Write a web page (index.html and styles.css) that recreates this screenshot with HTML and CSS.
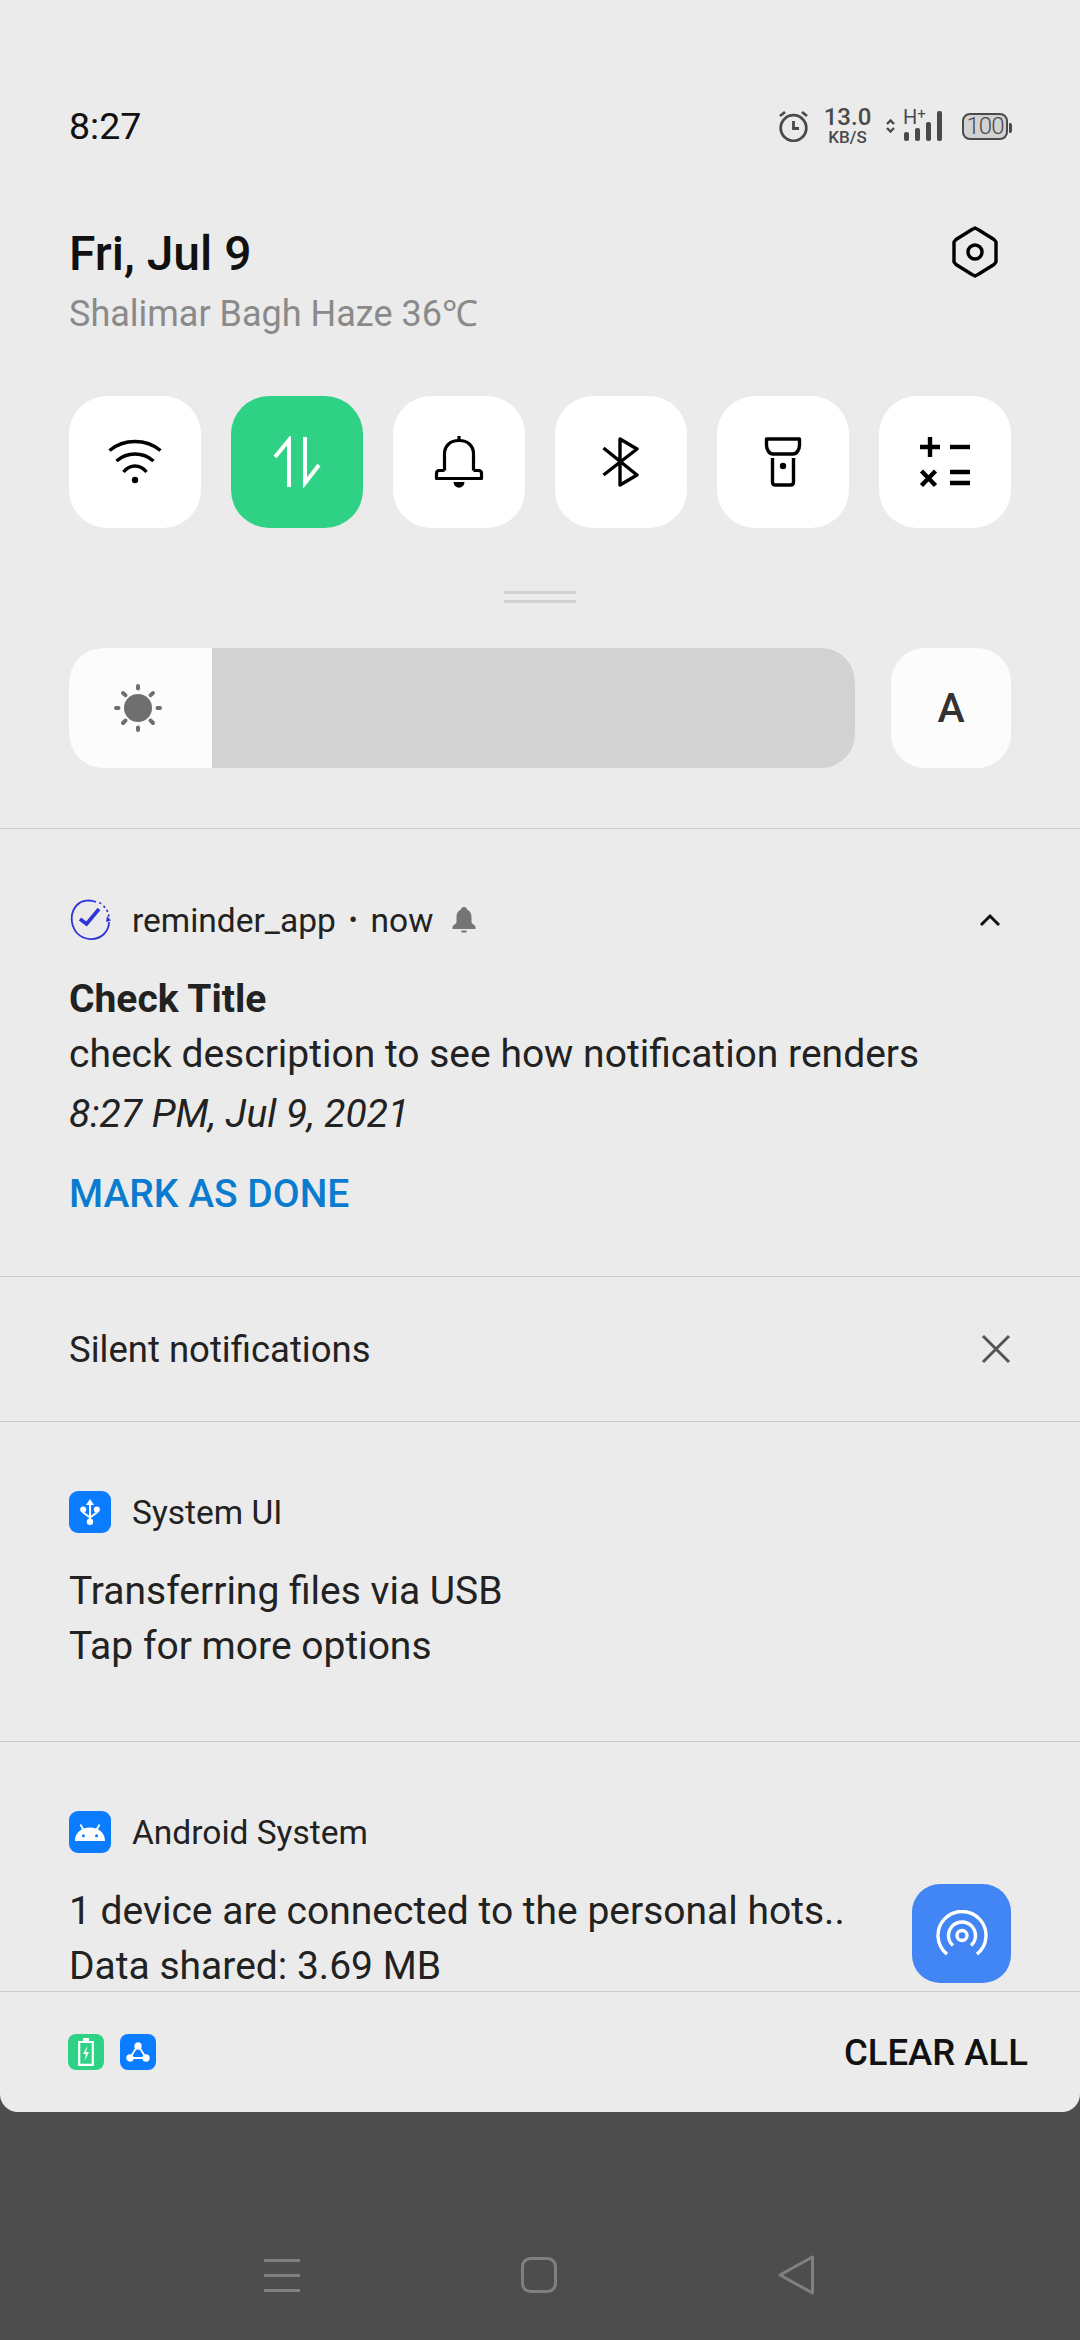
FILE: index.html
```html
<!DOCTYPE html>
<html lang="en">
<head>
    <meta charset="UTF-8">
    <title>Notification shade</title>
    <link rel="stylesheet" href="styles.css">
</head>
<body>
    <div class="panel">
        <!-- Quick settings -->
        <section class="quick">
            <div class="status">
                <span class="clock">8:27</span>
                <div class="status-icons">
                    <svg class="ic-alarm" width="30" height="32" viewBox="0 0 30 32" fill="none" stroke="#4a4a4a" stroke-width="2.800"><circle cx="15.500" cy="18" r="12.800"/><path d="M15.500 11V18.500H21"/><path d="M2 6 7 2M29 6 24 2"/></svg>
                    <div class="speed"><span class="speed-num">13.0</span><span class="speed-unit">KB/S</span></div>
                    <svg class="ic-arrows" width="9" height="16" viewBox="0 0 9 16" fill="none" stroke="#4a4a4a" stroke-width="2.400"><path d="M1 6 4.500 2.500 8 6M1 10 4.500 13.500 8 10"/></svg>
                    <div class="signal">
                        <span class="signal-type">H<sup>+</sup></span>
                        <svg width="38" height="30" viewBox="0 0 38 30" fill="#4a4a4a"><rect x="0" y="21" width="5" height="9" rx="2"/><rect x="11" y="17" width="5" height="13" rx="2"/><rect x="22" y="11" width="5" height="19" rx="2"/><rect x="33" y="0" width="5" height="30" rx="2"/></svg>
                    </div>
                    <div class="battery"><span>100</span></div>
                </div>
            </div>

            <div class="date-row">
                <div>
                    <div class="date">Fri, Jul 9</div>
                    <div class="weather">Shalimar Bagh Haze 36℃</div>
                </div>
                <svg class="ic-gear" width="50" height="52" viewBox="0 0 50 52" fill="none" stroke="#000" stroke-width="3.400" stroke-linejoin="round"><path d="M25 2 28 3.500 44 13.500 46 16V36L44 38.500 28 48.500 25 50 22 48.500 6 38.500 4 36V16L6 13.500 22 3.500Z"/><circle cx="25" cy="26" r="7"/></svg>
            </div>

            <div class="tiles">
                <div class="tile">
                    <svg width="54" height="46" viewBox="0 0 54 46" fill="none" stroke="#000" stroke-width="3.400"><path d="M1.500 11.500C16 -.5 38 -.5 52.500 11.500"/><path d="M8.500 22C19 12.700 35 12.700 45.500 22"/><path d="M15.500 33C22 25 32 25 38.500 33"/><circle cx="27" cy="41" r="3.200" fill="#000" stroke="none"/></svg>
                </div>
                <div class="tile tile-on">
                    <svg width="48" height="52" viewBox="0 0 48 52" fill="none" stroke="#fff" stroke-width="4"><path d="M2 21 16 4V51"/><path d="M32 1V47L46 29"/></svg>
                </div>
                <div class="tile">
                    <svg width="50" height="54" viewBox="0 0 50 54" fill="none" stroke="#000" stroke-width="3.200" stroke-linejoin="round"><path d="M10.500 35.500V19C10.500 11 16 5.500 25 5.500S39.500 11 39.500 19V35.500"/><path d="M10.500 35.500H5.500C3.500 35.500 2.500 36.500 2.500 38.500V43.500H47.500V38.500C47.500 36.500 46.500 35.500 44.500 35.500H39.500"/><path d="M25 1V5.500"/><path d="M19.500 47H30.500C30 54.500 20 54.500 19.500 47Z" fill="#000" stroke="none"/></svg>
                </div>
                <div class="tile">
                    <svg width="38" height="50" viewBox="0 0 38 50" fill="none" stroke="#000" stroke-width="3.400" stroke-linejoin="round"><path d="M1.500 11 35 38 18 48V2L35 12 1.500 38"/></svg>
                </div>
                <div class="tile">
                    <svg width="38" height="50" viewBox="0 0 38 50" fill="none" stroke="#000" stroke-width="3.400" stroke-linejoin="round"><path d="M2.500 2H35.500V8C35.500 13 32.500 17 29 17H9C5.500 17 2.500 13 2.500 8Z"/><path d="M8.500 21V45C8.500 47 9.500 48 11.500 48H26.500C28.500 48 29.500 47 29.500 45V21"/><circle cx="19" cy="29" r="3.200" fill="#000" stroke="none"/></svg>
                </div>
                <div class="tile">
                    <svg width="52" height="50" viewBox="0 0 52 50" fill="none" stroke="#000" stroke-width="4.400"><path d="M11 0V20M1 10H21"/><path d="M31 10H51"/><path d="M2.500 34 16.500 48.500M16.500 34 2.500 48.500"/><path d="M31 35H51M31 46H51"/></svg>
                </div>
            </div>

            <div class="grip"></div>

            <div class="brightness">
                <div class="slider">
                    <div class="slider-fill">
                        <svg width="48" height="48" viewBox="0 0 48 48" fill="#6f6f6f"><circle cx="24" cy="24" r="14"/><g stroke="#6f6f6f" stroke-width="4" stroke-linecap="round"><path d="M24 2V4.500M24 43.500V46M2 24H4.500M43.500 24H46M9 9l2.500 2.200M39 9l-2.500 2.200M9 39l2.500-2.500M39 39l-2.500-2.500"/></g></svg>
                    </div>
                </div>
                <div class="auto">A</div>
            </div>
        </section>

        <!-- reminder_app -->
        <section class="notif notif-main">
            <div class="notif-head">
                <svg class="app-icon" width="42" height="42" viewBox="0 0 42 42" fill="none" stroke="#2f35d8" stroke-width="1.800"><path d="M27 3C21 .500 13 1 8 6 1 13 1 25 7.500 33.500 15 42 28 42 35 35 38 32 40 28 40 23"/><path d="M31 4l.5.300M35 7.500l.5.600M38 11.500l.4.700M39.600 16l.2.800" stroke-linecap="round"/><path d="M11 20 17.500 25 30 10" stroke-width="3.600"/><path d="M38 17l4 4.500-5 1.500Z" fill="#2f35d8" stroke="none"/></svg>
                <span class="app-name">reminder_app</span>
                <span class="dot">•</span>
                <span class="app-name">now</span>
                <svg class="ic-mute" width="24" height="26" viewBox="0 0 24 26" fill="#757575"><path d="M12 0C14 0 15 1 15 2.500 18.500 4 19.500 7 19.500 10V15C19.500 17 23.500 18 23.500 20V22H.5V20C.5 18 4.500 17 4.500 15V10C4.500 7 5.500 4 9 2.500 9 1 10 0 12 0Z"/><path d="M9 23.500H15C15 26.500 9 26.500 9 23.500Z"/></svg>
                <svg class="ic-chevron" width="22" height="14" viewBox="0 0 22 14" fill="none" stroke="#111" stroke-width="3"><path d="M2 12 11 3 20 12"/></svg>
            </div>
            <div class="title">Check Title</div>
            <div class="text">check description to see how notification renders</div>
            <div class="text when">8:27 PM, Jul 9, 2021</div>
            <div class="action">MARK AS DONE</div>
        </section>

        <section class="silent">
            <span>Silent notifications</span>
            <svg width="30" height="30" viewBox="0 0 30 30" fill="none" stroke="#555" stroke-width="3"><path d="M2 2 28 28M28 2 2 28"/></svg>
        </section>

        <section class="notif notif-usb">
            <div class="notif-head">
                <span class="app-square">
                    <svg width="20" height="26" viewBox="0 0 20 26" fill="#fff" stroke="none"><path d="M10 0 14 6H6Z"/><circle cx="3.200" cy="10.500" r="3"/><circle cx="16.800" cy="10.500" r="3"/><circle cx="10" cy="22.800" r="3.200"/><path d="M10 4V22M3.200 11V13.500L10 18.500 16.800 13.500V11" fill="none" stroke="#fff" stroke-width="2"/></svg>
                </span>
                <span class="app-name">System UI</span>
            </div>
            <div class="text">Transferring files via USB</div>
            <div class="text">Tap for more options</div>
        </section>

        <section class="notif notif-hotspot">
            <div class="notif-head">
                <span class="app-square">
                    <svg width="30" height="17" viewBox="0 0 32 18" fill="#fff"><path d="M0 18C0 12 3 8 7.500 5.500L5 1 6.500 0 9.500 4.800C11.500 4 13.800 3.600 16 3.600S20.500 4 22.500 4.800L25.500 0 27 1 24.500 5.500C29 8 32 12 32 18Z"/><circle cx="9" cy="12.500" r="1.600" fill="#0a7cff"/><circle cx="23" cy="12.500" r="1.600" fill="#0a7cff"/></svg>
                </span>
                <span class="app-name">Android System</span>
            </div>
            <div class="hotspot-row">
                <div>
                    <div class="text">1 device are connected to the personal hots..</div>
                    <div class="text">Data shared: 3.69 MB</div>
                </div>
                <div class="hotspot-icon">
                    <svg width="52" height="48" viewBox="0 0 52 48" fill="none" stroke="#fff" stroke-width="3.400"><path d="M11 44.200A24 24 0 1 1 41 44.200"/><path d="M17 35.500A13.500 13.500 0 1 1 35 35.500"/><circle cx="26" cy="25.500" r="5"/></svg>
                </div>
            </div>
        </section>

        <footer class="panel-foot">
            <div class="foot-icons">
                <span class="foot-icon foot-green">
                    <svg width="16" height="28" viewBox="0 0 16 28" fill="none" stroke="#fff" stroke-width="2.200"><path d="M1.200 4H14.800V26.800H1.200Z"/><path d="M5 1.500H11" stroke-width="3"/><path d="M9.500 8 5 16H8L6.500 23 11 14H8Z" fill="#fff" stroke="none"/></svg>
                </span>
                <span class="foot-icon foot-blue">
                    <svg width="24" height="22" viewBox="0 0 24 22" fill="#fff" stroke="#fff" stroke-width="1.800"><path d="M12 4 4 17H20Z" fill="none"/><circle cx="12" cy="5" r="2.800"/><circle cx="4" cy="17" r="2.800"/><circle cx="20" cy="17" r="2.800"/></svg>
                </span>
            </div>
            <span class="clear-all">CLEAR ALL</span>
        </footer>
    </div>

    <!-- Navigation bar -->
    <nav class="navbar">
        <svg width="36" height="34" viewBox="0 0 36 34" fill="#808080"><rect y="1" width="36" height="3"/><rect y="16" width="36" height="3"/><rect y="31" width="36" height="3"/></svg>
        <svg width="36" height="36" viewBox="0 0 36 36" fill="none" stroke="#808080" stroke-width="3"><rect x="1.500" y="1.500" width="33" height="33" rx="8"/></svg>
        <svg width="36" height="40" viewBox="0 0 36 40" fill="none" stroke="#808080" stroke-width="3" stroke-linejoin="round"><path d="M34.500 2V38L2 20Z"/></svg>
    </nav>
</body>
</html>
```

FILE: styles.css
```css
html, body {
    margin: 0;
    padding: 0;
}

* {
    box-sizing: border-box;
}

body {
    width: 1080px;
    height: 2340px;
    overflow: hidden;
    background-color: #4d4d4d;
    font-family: Roboto, sans-serif;
    color: #222;
}

svg {
    display: block;
    flex: none;
}

.panel {
    height: 2112px;
    background-color: #ebebeb;
    border-radius: 0 0 18px 18px;
    display: flex;
    flex-direction: column;
    overflow: hidden;
}

.quick {
    height: 829px;
    padding: 0 69px;
    border-bottom: 1px solid #cfcfcf;
}

.status {
    height: 100px;
    margin-top: 76px;
    display: flex;
    justify-content: space-between;
    align-items: center;
}

.clock {
    font-size: 37.500px;
    color: #111;
}

.status-icons {
    display: flex;
    align-items: center;
    color: #4a4a4a;
}

.ic-alarm {
    margin-right: 16px;
}

.speed {
    width: 47px;
    display: flex;
    flex-direction: column;
    align-items: center;
    font-weight: 500;
    margin-right: 15px;
}

.speed-num {
    font-size: 24px;
    line-height: 23px;
}

.speed-unit {
    font-size: 17px;
    line-height: 17px;
}

.ic-arrows {
    margin-right: 8px;
}

.signal {
    position: relative;
    width: 39px;
    height: 30px;
    display: flex;
    justify-content: flex-end;
    margin-right: 20px;
}

.signal-type {
    position: absolute;
    left: 0;
    top: -4px;
    font-size: 20px;
    line-height: 20px;
}

.signal-type sup {
    font-size: 15px;
    line-height: 0;
    vertical-align: 5px;
}

.battery {
    width: 46px;
    height: 27px;
    border: 2.500px solid #4a4a4a;
    border-radius: 8px;
    background-color: #d2d2d2;
    margin-right: 3px;
    display: flex;
    align-items: center;
    justify-content: center;
    font-size: 24px;
    font-weight: 300;
    letter-spacing: -1px;
    position: relative;
}

.battery::after {
    content: "";
    position: absolute;
    right: -6px;
    top: 8px;
    width: 3px;
    height: 10px;
    background-color: #4a4a4a;
    border-radius: 0 2px 2px 0;
}

.date-row {
    margin-top: 50px;
    display: flex;
    justify-content: space-between;
    align-items: flex-start;
}

.date {
    font-size: 48px;
    font-weight: 500;
    line-height: 56px;
    color: #111;
}

.weather {
    font-size: 36px;
    line-height: 44px;
    margin-top: 10px;
    color: #8a8a8a;
}

.ic-gear {
    margin: 0 11px 0 0;
}

.tiles {
    margin-top: 60px;
    display: flex;
    justify-content: space-between;
}

.tile {
    width: 132px;
    height: 132px;
    background-color: #fff;
    border-radius: 38px;
    display: flex;
    align-items: center;
    justify-content: center;
}

.tile-on {
    background-color: #2fd285;
}

.grip {
    width: 72px;
    height: 12px;
    margin: 63px auto 0;
    border-top: 3px solid #d2d2d2;
    border-bottom: 3px solid #d2d2d2;
}

.brightness {
    margin-top: 45px;
    display: flex;
    justify-content: space-between;
}

.slider {
    width: 786px;
    height: 120px;
    background-color: #d2d2d2;
    border-radius: 34px;
    overflow: hidden;
}

.slider-fill {
    width: 143px;
    height: 120px;
    padding-right: 5px;
    background-color: #fcfcfc;
    display: flex;
    align-items: center;
    justify-content: center;
}

.auto {
    width: 120px;
    height: 120px;
    background-color: #fcfcfc;
    border-radius: 34px;
    display: flex;
    align-items: center;
    justify-content: center;
    font-size: 41px;
    font-weight: 500;
    color: #333;
}

.notif {
    padding: 0 69px;
    border-bottom: 1px solid #c9c9c9;
}

.notif-main {
    height: 448px;
    padding-top: 70px;
}

.notif-usb {
    height: 320px;
    padding-top: 69px;
}

.notif-hotspot {
    height: 250px;
    padding-top: 69px;
    overflow: hidden;
}

.notif-head {
    height: 42px;
    display: flex;
    align-items: center;
    position: relative;
}

.app-icon {
    margin-right: 21px;
}

.app-name {
    font-size: 33.500px;
    color: #222;
}

.dot {
    font-size: 26px;
    margin: 0 13px;
}

.ic-mute {
    margin-left: 19px;
}

.ic-chevron {
    position: absolute;
    right: 10px;
    top: 14px;
}

.app-square {
    width: 42px;
    height: 42px;
    background-color: #0a7cff;
    border-radius: 9px;
    margin-right: 21px;
    display: flex;
    align-items: center;
    justify-content: center;
}

.title {
    font-size: 39px;
    font-weight: 700;
    line-height: 46px;
    margin: 35px 0 4px;
    color: #222;
}

.text {
    font-size: 39px;
    line-height: 55px;
    color: #222;
}

.notif-main .text {
    line-height: 56px;
}

.when {
    font-style: italic;
    margin-top: 4px;
}

.action {
    font-size: 39px;
    font-weight: 500;
    line-height: 46px;
    margin-top: 29px;
    color: #0a7ccf;
}

.notif-usb .notif-head,
.notif-hotspot .notif-head {
    margin-bottom: 31px;
}

.silent {
    height: 145px;
    padding: 0 69px 0 69px;
    border-bottom: 1px solid #c9c9c9;
    display: flex;
    align-items: center;
    justify-content: space-between;
    font-size: 36.500px;
}

.hotspot-row {
    display: flex;
    justify-content: space-between;
    align-items: flex-start;
}

.hotspot-icon {
    width: 99px;
    height: 99px;
    margin-top: 0;
    background-color: #4285f4;
    border-radius: 28px;
    display: flex;
    align-items: center;
    justify-content: center;
}

.panel-foot {
    flex: 1;
    padding: 0 52px 0 68px;
    display: flex;
    align-items: center;
    justify-content: space-between;
}

.foot-icons {
    display: flex;
    gap: 16px;
}

.foot-icon {
    width: 36px;
    height: 36px;
    border-radius: 8px;
    display: flex;
    align-items: center;
    justify-content: center;
}

.foot-green {
    background-color: #2fd285;
}

.foot-blue {
    background-color: #0a7cff;
}

.clear-all {
    font-size: 36.500px;
    font-weight: 500;
    color: #111;
}

.navbar {
    height: 228px;
    padding: 97px 0 0 264px;
    display: flex;
    align-items: center;
    gap: 221px;
}
```
